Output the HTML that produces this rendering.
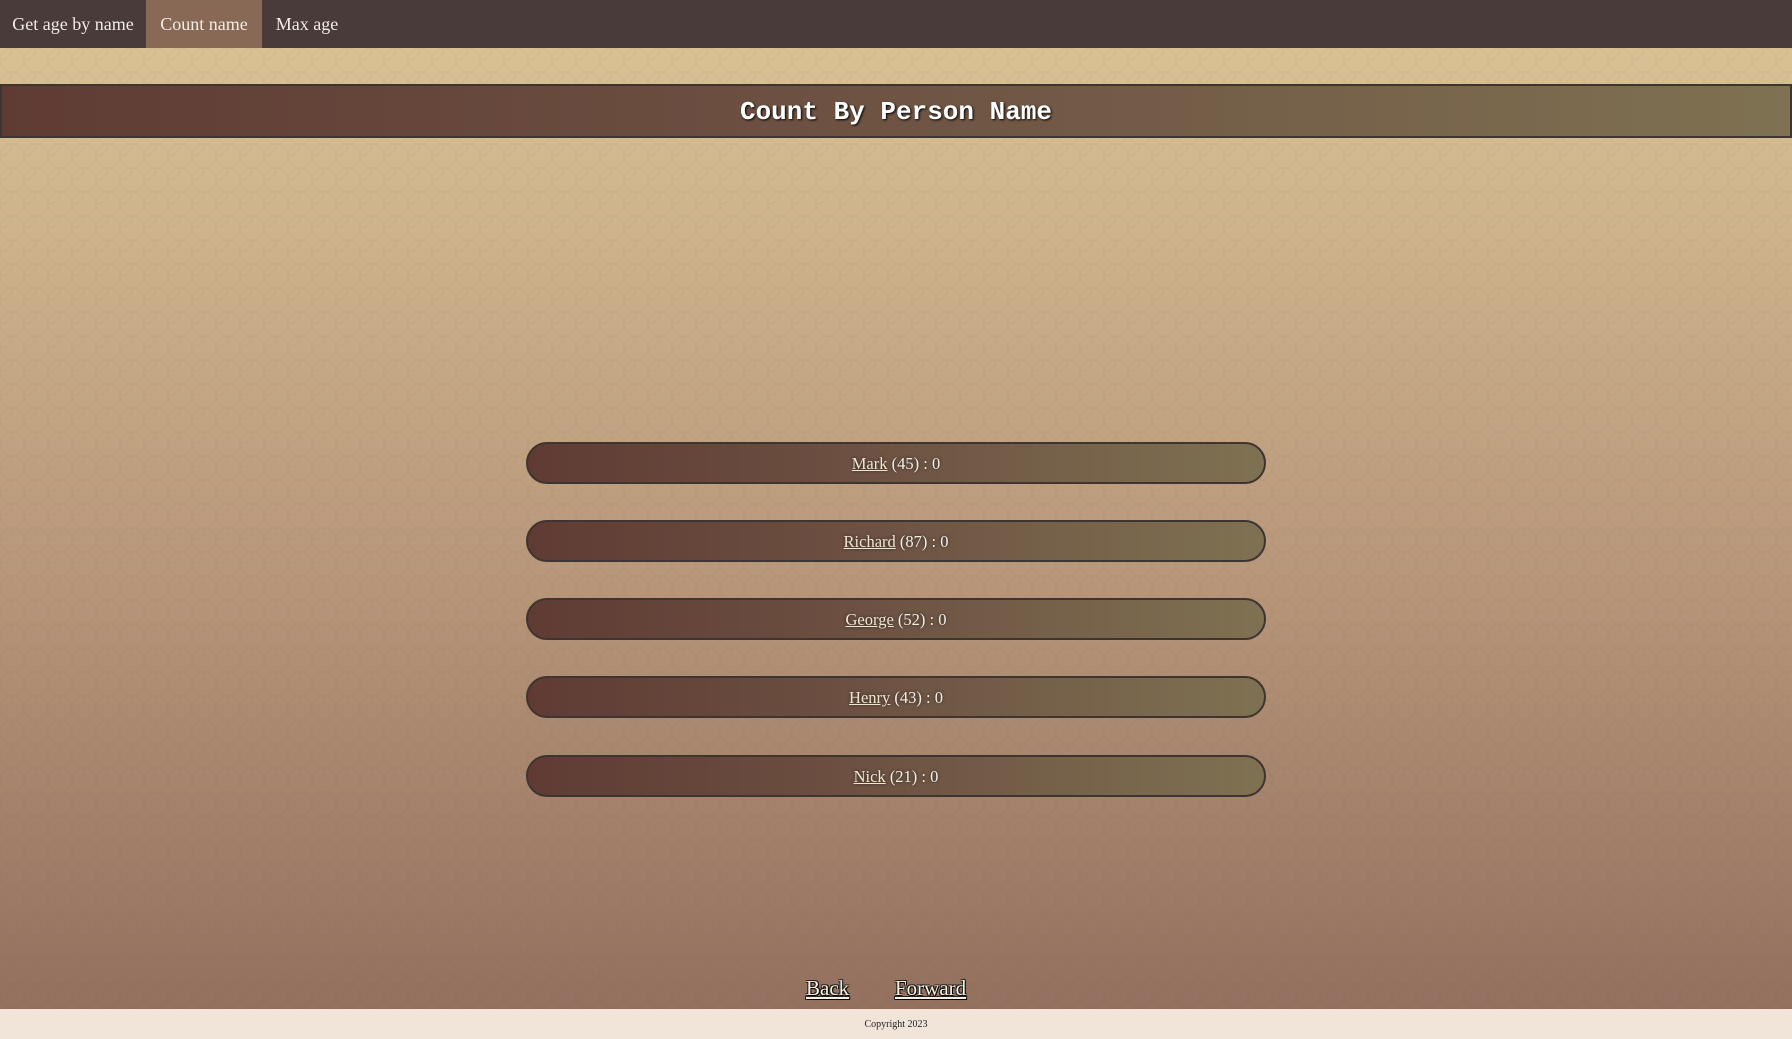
<!DOCTYPE html>
<html><head><meta charset="utf-8"><style>
html,body{margin:0;padding:0;width:1792px;height:1039px;overflow:hidden;font-family:"Liberation Serif",serif;}
body{background:linear-gradient(180deg,#dcc596 0%,#cfb58d 20%,#b8977a 55%,#93705f 97%);position:relative;}
.pat{position:absolute;left:0;top:48px;width:1792px;height:961px;opacity:.07;
background-image:radial-gradient(circle at 0 0,transparent 11px,#7a5a3a 12px,transparent 13px),radial-gradient(circle at 12px 12px,transparent 11px,#7a5a3a 12px,transparent 13px);background-size:24px 24px;}
nav{position:absolute;top:0;left:0;width:1792px;height:48px;background:#493b39;}
nav span{position:absolute;top:0;height:48px;line-height:48px;color:#f2ece6;font-size:18px;text-align:center;}
.hdr{position:absolute;left:0;top:84px;width:1788px;height:50px;border:2px solid #3f3530;
background:linear-gradient(90deg,#5f3b34,#6b4e40 40%,#7f7152);text-align:center;line-height:52px;
font-family:"Liberation Mono",monospace;font-weight:bold;font-size:26px;color:#fff;text-shadow:1px 1px 2px #000;}
.pill{position:absolute;left:526px;width:736px;height:38px;border:2px solid #3e3430;border-radius:21px;
background:linear-gradient(90deg,#5f3b34,#6b4e40 40%,#7f7152);text-align:center;line-height:40px;color:#f5efe8;font-size:16.5px;text-shadow:0 0 3px #222;}
.pill u{color:#f3e6cc}
.nav2{position:absolute;top:976px;font-size:21px;color:#f8f0dc;text-decoration:underline;text-shadow:1px 1px 0 #000,-1px -1px 0 #222,1px -1px 0 #222,-1px 1px 0 #222;}
footer{position:absolute;left:0;top:1009px;width:1792px;height:30px;background:#f1e4d8;text-align:center;font-size:10px;line-height:32px;color:#222;}
</style></head><body>
<div class="pat"></div>
<nav><span style="left:0;width:146px">Get age by name</span><span style="left:146px;width:116px;background:#876955">Count name</span><span style="left:262px;width:90px">Max age</span></nav>
<div class="hdr">Count By Person Name</div>
<div class="pill" style="top:442px"><u>Mark</u> (45) : 0</div>
<div class="pill" style="top:520px"><u>Richard</u> (87) : 0</div>
<div class="pill" style="top:598px"><u>George</u> (52) : 0</div>
<div class="pill" style="top:676px"><u>Henry</u> (43) : 0</div>
<div class="pill" style="top:755px"><u>Nick</u> (21) : 0</div>
<span class="nav2" style="left:806px">Back</span>
<span class="nav2" style="left:895px">Forward</span>
<footer>Copyright 2023</footer>
</body></html>
